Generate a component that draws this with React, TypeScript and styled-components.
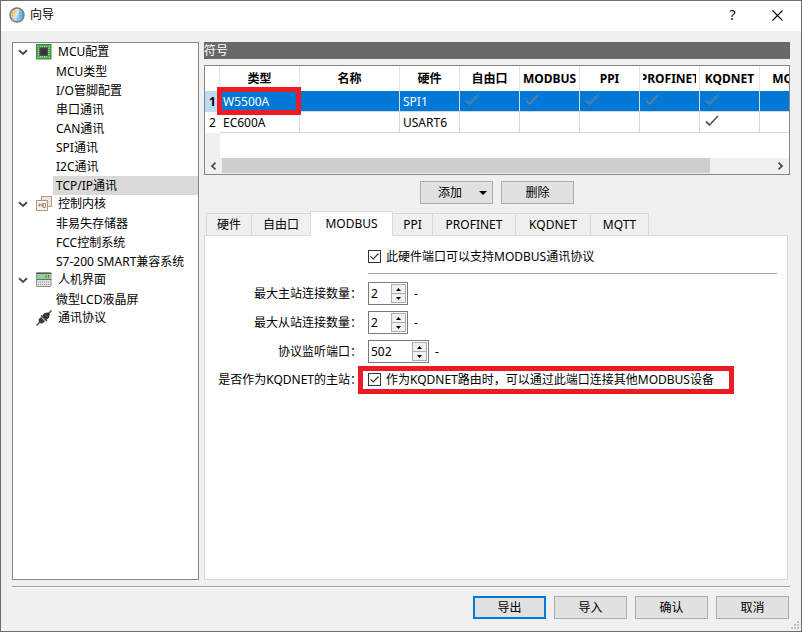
import React, { useState } from "react";
import styled, { createGlobalStyle } from "styled-components";

const GlobalStyle = createGlobalStyle`
  *, *::before, *::after { box-sizing: border-box; }
  html, body { margin: 0; background: #f0f0f0; }
  body, button, input, table {
    font-family: "Noto Sans", "Noto Sans CJK SC", sans-serif;
    font-size: 12px;
    line-height: 18px;
    color: #000;
  }
  button { padding: 0; margin: 0; }
  svg { display: block; }
`;

const Window = styled.div`
  min-height: 100vh;
  display: flex;
  flex-direction: column;
  border: 1px solid #6e6c6e;
  background: #f0f0f0;
`;

const TitleBar = styled.header`
  display: flex;
  align-items: center;
  height: 30px;
  padding: 0 1px 2px 8px;
  background: #fff;
`;

const Title = styled.h1`
  flex: 1;
  margin: 0 0 0 5px;
  font-size: 12px;
  line-height: 18px;
  font-weight: 400;
`;

const CaptionButton = styled.button`
  display: grid;
  place-items: center;
  width: 45px;
  height: 28px;
  border: 0;
  background: transparent;
  font-size: 14px;
`;

const Body = styled.main`
  flex: 1;
  display: flex;
  gap: 5px;
  padding: 11px 11px 6px;
`;

const Tree = styled.ul`
  flex: none;
  width: 187px;
  margin: 0;
  padding: 0;
  list-style: none;
  border: 1px solid #828790;
  background: #fff;
`;

const Branch = styled.ul`
  margin: 0;
  padding: 0;
  list-style: none;
`;

const BranchRow = styled.div`
  display: flex;
  align-items: center;
  height: 19px;
  padding: 0 0 1px 5px;
  white-space: nowrap;
`;

const Toggle = styled.button`
  display: grid;
  place-items: center;
  width: 10px;
  height: 18px;
  border: 0;
  background: transparent;
`;

const BranchIcon = styled.span`
  margin: 0 6px 0 8px;
`;

const Leaf = styled.li<{ $selected?: boolean }>`
  height: 19px;
  margin-left: 40px;
  padding-left: 3px;
  line-height: 19px;
  white-space: nowrap;
  background: ${(p) => (p.$selected ? "#d9d9d9" : "transparent")};
`;

const Content = styled.section`
  flex: 1;
  min-width: 0;
  display: flex;
  flex-direction: column;
`;

const SectionTitle = styled.h2`
  margin: 0 0 6px;
  height: 17px;
  font-size: 12px;
  line-height: 17px;
  font-weight: 400;
  color: #fff;
  background: #696969;
`;

const TableBox = styled.div`
  display: flex;
  flex-direction: column;
  height: 110px;
  border: 1px solid #828790;
  background: #fff;
`;

const TableView = styled.div`
  flex: 1;
  overflow: hidden;
  background: linear-gradient(to right, #f0f0f0 15px, #fff 15px);
`;

const Table = styled.table`
  table-layout: fixed;
  width: 675px;
  border-collapse: separate;
  border-spacing: 0;
  background: #fff;
`;

const ColHead = styled.th`
  height: 25px;
  padding: 0 3px;
  border-right: 1px solid #e5e5e5;
  font-weight: 700;
`;

const HeadText = styled.span`
  display: flex;
  justify-content: center;
  overflow: hidden;
  white-space: nowrap;
`;

const RowHead = styled.th<{ $selected?: boolean }>`
  height: 21px;
  padding: 0;
  text-align: center;
  font-weight: ${(p) => (p.$selected ? 700 : 400)};
  background: ${(p) => (p.$selected ? "#bcdcf4" : "#fff")};
`;

const Cell = styled.td<{ $selected?: boolean }>`
  position: relative;
  height: 21px;
  padding: 1px 3px 0;
  border-right: 1px solid #d8d8d8;
  border-bottom: 1px solid #d8d8d8;
  white-space: nowrap;
  color: ${(p) => (p.$selected ? "#fff" : "#000")};
  background: ${(p) => (p.$selected ? "#0078d7" : "#fff")};
`;

const CellMark = styled.span`
  position: absolute;
  left: 5px;
  top: 3px;
`;

const CellHighlight = styled.span`
  position: absolute;
  z-index: 1;
  inset: -4px -2px -4px -3px;
  border: 5px solid #ed1c24;
  pointer-events: none;
`;

const ScrollBar = styled.div`
  display: flex;
  height: 16px;
  background: #f0f0f0;
`;

const ScrollArrow = styled.button`
  display: grid;
  place-items: center;
  width: 17px;
  height: 15px;
  border: 0;
  background: transparent;
`;

const ScrollTrack = styled.div`
  flex: 1;
  padding-right: 62px;
`;

const ScrollThumb = styled.div`
  height: 15px;
  background: #cdcdcd;
`;

const TableActions = styled.div`
  display: flex;
  justify-content: center;
  gap: 8px;
  margin: 6px 0 7px;
`;

const PushButton = styled.button<{ $primary?: boolean }>`
  display: flex;
  align-items: center;
  justify-content: center;
  width: 73px;
  height: 23px;
  border: ${(p) => (p.$primary ? "2px solid #0078d7" : "1px solid #adadad")};
  background: #e1e1e1;
`;

const SplitText = styled.span`
  flex: 1;
`;

const SplitArrow = styled.span`
  width: 13px;
`;

const TabList = styled.div`
  display: flex;
  align-items: flex-end;
  height: 25px;
  margin: 0 0 -1px 2px;
`;

const Tab = styled.button<{ $selected: boolean; $width: number }>`
  position: relative;
  width: ${(p) => p.$width}px;
  height: ${(p) => (p.$selected ? 25 : 23)}px;
  margin-left: -1px;
  border: 1px solid #d9d9d9;
  border-bottom-color: ${(p) => (p.$selected ? "#fff" : "#d9d9d9")};
  background: ${(p) => (p.$selected ? "#fff" : "#f0f0f0")};
  z-index: ${(p) => (p.$selected ? 1 : 0)};
  white-space: nowrap;
  &:first-child { margin-left: 0; }
`;

const TabPanel = styled.form`
  flex: 1;
  margin-right: 2px;
  padding: 10px 10px 10px 9px;
  border: 1px solid #d9d9d9;
  background: #fff;
`;

const FormGrid = styled.div`
  display: grid;
  grid-template-columns: 148px 1fr;
  column-gap: 6px;
  align-items: center;
`;

const SupportRow = styled.div`
  grid-column: 2;
  height: 28px;
  padding-top: 2px;
  margin-bottom: 5px;
  border-bottom: 1px solid #a0a0a0;
`;

const FieldLabel = styled.label`
  justify-self: end;
  white-space: nowrap;
`;

const FieldRow = styled.div<{ $compact?: boolean }>`
  display: flex;
  align-items: center;
  gap: 6px;
  height: ${(p) => (p.$compact ? 27 : 29)}px;
`;

const CheckLabel = styled.label`
  display: flex;
  align-items: center;
  gap: 5px;
  white-space: nowrap;
`;

const CheckShell = styled.span`
  display: grid;
  place-items: center;
  padding-bottom: 1px;
  & > * { grid-area: 1 / 1; }
  & > svg { pointer-events: none; }
  & > input:not(:checked) + svg { display: none; }
`;

const CheckInput = styled.input`
  appearance: none;
  width: 13px;
  height: 13px;
  margin: 0;
  border: 1px solid #333;
  background: #fff;
`;

const HighlightAnchor = styled.div`
  position: relative;
`;

const FieldHighlight = styled.span`
  position: absolute;
  inset: -5px -20px -5px -10px;
  border: 5px solid #ed1c24;
  pointer-events: none;
`;

const SpinShell = styled.span<{ $wide?: boolean }>`
  display: flex;
  width: ${(p) => (p.$wide ? 61 : 40)}px;
  height: 23px;
  padding: 1px;
  border: 1px solid #7a7a7a;
  background: #fff;
`;

const SpinInput = styled.input`
  flex: 1;
  min-width: 0;
  padding: 0 0 0 1px;
  border: 0;
  outline: 0;
  background: transparent;
`;

const SpinButtons = styled.span`
  display: flex;
  flex-direction: column;
  width: 15px;
`;

const SpinButton = styled.button`
  display: grid;
  place-items: center;
  flex: 1;
  min-height: 0;
  border: 1px solid #adadad;
  background: #f0f0f0;
  & + & { border-top: 0; }
`;

const Footer = styled.footer`
  display: flex;
  justify-content: flex-end;
  gap: 8px;
  margin: 0 11px;
  padding: 9px 1px 12px;
  border-top: 1px solid #a0a0a0;
  box-shadow: inset 0 1px #fff;
`;

const Grip = styled.span`
  position: fixed;
  right: 3px;
  bottom: 3px;
`;

const AppIcon = () => (
  <svg width="16" height="16" viewBox="0 0 16 16">
    <defs>
      <linearGradient id="globe" x1="0" y1="0.2" x2="1" y2="0.5">
        <stop offset="0.05" stopColor="#e8a552" />
        <stop offset="0.35" stopColor="#f6c77c" />
        <stop offset="0.52" stopColor="#d9edf0" />
        <stop offset="0.65" stopColor="#6dbfe4" />
        <stop offset="1" stopColor="#2d8fc4" />
      </linearGradient>
      <linearGradient id="globeBase" x1="0" y1="0" x2="0" y2="1">
        <stop offset="0.5" stopColor="#9ad4ec" stopOpacity="0" />
        <stop offset="1" stopColor="#7fcbe9" stopOpacity="0.9" />
      </linearGradient>
    </defs>
    <circle cx="8" cy="8" r="7" fill="url(#globe)" />
    <circle cx="8" cy="8" r="7" fill="url(#globeBase)" stroke="#6f7980" strokeWidth="1.4" />
    <path d="M4.5 2.5v11M7 1.5v13M9.5 1.5v13M12 3v10M2 5h12M1.5 7.5h13M2 10h12" stroke="#fff" strokeOpacity=".35" strokeWidth=".5" />
  </svg>
);

const ChipIcon = () => (
  <svg width="16" height="16" viewBox="0 0 16 16">
    <rect x=".5" y=".5" width="14.5" height="14.5" fill="#4bb052" stroke="#3a8a3e" />
    <path d="M1.5 2h1M13 2h1M1.5 13.5h1M13 13.5h1" stroke="#c4ecc5" />
    <path d="M4.5 2v11.5M6.5 2v11.5M8.5 2v11.5M10.5 2v11.5M2 4.5h11.5M2 6.5h11.5M2 8.5h11.5M2 10.5h11.5" stroke="#dfe3a5" strokeWidth=".7" />
    <rect x="3.3" y="3.3" width="8.8" height="8.8" rx="1" fill="#4b474d" />
    <rect x="4.6" y="4.6" width="6.2" height="6.2" fill="#38343a" />
  </svg>
);

const KernelIcon = () => (
  <svg width="16" height="16" viewBox="0 0 16 16">
    <rect x="5.5" y=".5" width="10" height="10" fill="#f2e5d7" stroke="#b39c86" />
    <rect x=".5" y="4.5" width="11" height="10" fill="#fbf1e7" stroke="#ad9684" />
    <path d="M2 9h1.5M3.5 7.5v3M5 7.5v3M5 9h1.5M7 7.5h2.5v4h-2.5zM6.8 7.5v3" stroke="#8b7464" strokeWidth=".8" fill="none" />
  </svg>
);

const PanelIcon = () => (
  <svg width="16" height="16" viewBox="0 0 16 16">
    <rect x=".5" y=".5" width="14.5" height="14" rx=".5" fill="#e2dfe0" stroke="#969293" />
    <rect x="1" y="2" width="13.5" height="5" fill="#91cd96" />
    <path d="M0 1.5h15.5" stroke="#5b5f5c" />
    <path d="M0 7.5h15.5" stroke="#637568" />
    <path d="M10 3v3M12.5 3v3" stroke="#45904d" />
    <path d="M2 10h11.5M2 12.5h11.5" stroke="#9b9798" strokeDasharray="1 1" />
  </svg>
);

const PlugIcon = () => (
  <svg width="16" height="16" viewBox="0 0 16 16">
    <path d="M.5 15.5L4 12M12 4L15.5.5" stroke="#555" strokeWidth="1.5" />
    <path d="M3 13L2.5 9.5L5 7L9 11.2L6.5 13.5z" fill="#3b3b3b" />
    <path d="M6 6L8.5 3L12.5 2.5L13.8 4L13 7.5L10.5 10z" fill="#303030" />
    <path d="M5 5.5L11 11.2" stroke="#444" strokeWidth="1.3" />
    <path d="M6.8 7.8L8.3 9.2M9 4.5L11.5 7" stroke="#999" strokeWidth=".8" />
  </svg>
);

const Chevron = () => (
  <svg width="10" height="7" viewBox="0 0 10 7">
    <path d="M1 1.2L5 5L9 1.2" fill="none" stroke="#4c4c4c" strokeWidth="1.9" />
  </svg>
);

const Tick = ({ dim }: { dim?: boolean }) => (
  <svg width="14" height="12" viewBox="0 0 14 12">
    <path d="M1 6.5L4.5 10L13 1" fill="none" stroke={dim ? "#6c7f92" : "#5c5c5c"} strokeWidth={dim ? 1.6 : 1.8} />
  </svg>
);

const BoxTick = () => (
  <svg width="11" height="11" viewBox="0 0 11 11">
    <path d="M1.5 5.3L4.2 8L9.5 2.5" fill="none" stroke="#333" strokeWidth="1.2" />
  </svg>
);

const Arrow = ({ up, large }: { up?: boolean; large?: boolean }) => (
  <svg width={large ? 8 : 5} height={large ? 4 : 3} viewBox="0 0 6 3" preserveAspectRatio="none">
    <path d={up ? "M0 3L3 0L6 3z" : "M0 0L3 3L6 0z"} fill="#000" />
  </svg>
);

const ScrollChevron = ({ right }: { right?: boolean }) => (
  <svg width="7" height="8" viewBox="0 0 7 8">
    <path d={right ? "M1.5 .7L5 4L1.5 7.3" : "M5.5 .7L2 4L5.5 7.3"} fill="none" stroke="#505050" strokeWidth="1.8" />
  </svg>
);

const tree = [
  { label: "MCU配置", icon: <ChipIcon />, items: ["MCU类型", "I/O管脚配置", "串口通讯", "CAN通讯", "SPI通讯", "I2C通讯", "TCP/IP通讯"] },
  { label: "控制内核", icon: <KernelIcon />, items: ["非易失存储器", "FCC控制系统", "S7-200 SMART兼容系统"] },
  { label: "人机界面", icon: <PanelIcon />, items: ["微型LCD液晶屏"] },
  { label: "通讯协议", icon: <PlugIcon />, items: [] },
];

const protocols = ["自由口", "MODBUS", "PPI", "PROFINET", "KQDNET", "MQTT"];

const devices = [
  { type: "W5500A", port: "SPI1", marks: ["自由口", "MODBUS", "PPI", "PROFINET", "KQDNET"] },
  { type: "EC600A", port: "USART6", marks: ["KQDNET"] },
];

const tabs = [
  { label: "硬件", width: 46 },
  { label: "自由口", width: 60 },
  { label: "MODBUS", width: 83 },
  { label: "PPI", width: 41 },
  { label: "PROFINET", width: 84 },
  { label: "KQDNET", width: 76 },
  { label: "MQTT", width: 59 },
];

function Check({ label }: { label: string }) {
  return (
    <CheckLabel>
      <CheckShell>
        <CheckInput type="checkbox" defaultChecked />
        <BoxTick />
      </CheckShell>
      {label}
    </CheckLabel>
  );
}

function SpinField({ id, label, initial, wide }: { id: string; label: string; initial: number; wide?: boolean }) {
  const [value, setValue] = useState(initial);
  return (
    <>
      <FieldLabel htmlFor={id}>{label}</FieldLabel>
      <FieldRow>
        <SpinShell $wide={wide}>
          <SpinInput id={id} inputMode="numeric" value={value} onChange={(e) => setValue(Number(e.target.value) || 0)} />
          <SpinButtons>
            <SpinButton type="button" aria-label="增加" onClick={() => setValue(value + 1)}><Arrow up /></SpinButton>
            <SpinButton type="button" aria-label="减少" onClick={() => setValue(Math.max(0, value - 1))}><Arrow /></SpinButton>
          </SpinButtons>
        </SpinShell>
        <span>-</span>
      </FieldRow>
    </>
  );
}

function DeviceTable() {
  return (
    <TableBox>
      <TableView>
        <Table>
          <colgroup>
            <col width="15" />
            <col width="80" />
            <col width="100" />
            <col width="60" />
            {protocols.map((p) => <col key={p} width="60" />)}
            <col width="60" />
          </colgroup>
          <thead>
            <tr>
              <ColHead />
              {["类型", "名称", "硬件", ...protocols].map((h) => (
                <ColHead key={h} scope="col"><HeadText>{h}</HeadText></ColHead>
              ))}
            </tr>
          </thead>
          <tbody>
            {devices.map((d, i) => {
              const selected = i === 0;
              return (
                <tr key={d.type}>
                  <RowHead scope="row" $selected={selected}>{i + 1}</RowHead>
                  <Cell $selected={selected}>{d.type}{selected && <CellHighlight />}</Cell>
                  <Cell $selected={selected} />
                  <Cell $selected={selected}>{d.port}</Cell>
                  {protocols.map((p) => (
                    <Cell key={p} $selected={selected}>
                      {d.marks.includes(p) && <CellMark><Tick dim={selected} /></CellMark>}
                    </Cell>
                  ))}
                </tr>
              );
            })}
          </tbody>
        </Table>
      </TableView>
      <ScrollBar>
        <ScrollArrow aria-label="向左滚动"><ScrollChevron /></ScrollArrow>
        <ScrollTrack><ScrollThumb /></ScrollTrack>
        <ScrollArrow aria-label="向右滚动"><ScrollChevron right /></ScrollArrow>
      </ScrollBar>
    </TableBox>
  );
}

export default function App() {
  const [tab, setTab] = useState("MODBUS");
  return (
    <Window>
      <GlobalStyle />
      <TitleBar>
        <AppIcon />
        <Title>向导</Title>
        <CaptionButton aria-label="帮助">?</CaptionButton>
        <CaptionButton aria-label="关闭">
          <svg width="11" height="11" viewBox="0 0 11 11">
            <path d="M.5 .5L10.5 10.5M10.5 .5L.5 10.5" stroke="#000" strokeWidth="1.1" />
          </svg>
        </CaptionButton>
      </TitleBar>
      <Body>
        <Tree>
          {tree.map((b) => (
            <li key={b.label}>
              <BranchRow>
                <Toggle aria-label={b.label}>{b.items.length > 0 && <Chevron />}</Toggle>
                <BranchIcon>{b.icon}</BranchIcon>
                {b.label}
              </BranchRow>
              <Branch>
                {b.items.map((item) => (
                  <Leaf key={item} $selected={item === "TCP/IP通讯"}>{item}</Leaf>
                ))}
              </Branch>
            </li>
          ))}
        </Tree>
        <Content>
          <SectionTitle>符号</SectionTitle>
          <DeviceTable />
          <TableActions>
            <PushButton>
              <SplitText>添加</SplitText>
              <SplitArrow><Arrow large /></SplitArrow>
            </PushButton>
            <PushButton>删除</PushButton>
          </TableActions>
          <TabList role="tablist">
            {tabs.map((t) => (
              <Tab key={t.label} role="tab" aria-selected={tab === t.label} $selected={tab === t.label} $width={t.width} onClick={() => setTab(t.label)}>
                {t.label}
              </Tab>
            ))}
          </TabList>
          <TabPanel role="tabpanel">
            <FormGrid>
              <SupportRow><Check label="此硬件端口可以支持MODBUS通讯协议" /></SupportRow>
              <SpinField id="masters" label="最大主站连接数量：" initial={2} />
              <SpinField id="slaves" label="最大从站连接数量：" initial={2} />
              <SpinField id="port" label="协议监听端口：" initial={502} wide />
              <FieldLabel as="span">是否作为KQDNET的主站：</FieldLabel>
              <FieldRow $compact>
                <HighlightAnchor>
                  <Check label="作为KQDNET路由时，可以通过此端口连接其他MODBUS设备" />
                  <FieldHighlight />
                </HighlightAnchor>
              </FieldRow>
            </FormGrid>
          </TabPanel>
        </Content>
      </Body>
      <Footer>
        <PushButton $primary>导出</PushButton>
        <PushButton>导入</PushButton>
        <PushButton>确认</PushButton>
        <PushButton>取消</PushButton>
      </Footer>
      <Grip>
        <svg width="8" height="8" viewBox="0 0 8 8">
          <path d="M6 0h2v2H6zM3 3h2v2H3zM6 3h2v2H6zM0 6h2v2H0zM3 6h2v2H3zM6 6h2v2H6z" fill="#bfbfbf" />
        </svg>
      </Grip>
    </Window>
  );
}
